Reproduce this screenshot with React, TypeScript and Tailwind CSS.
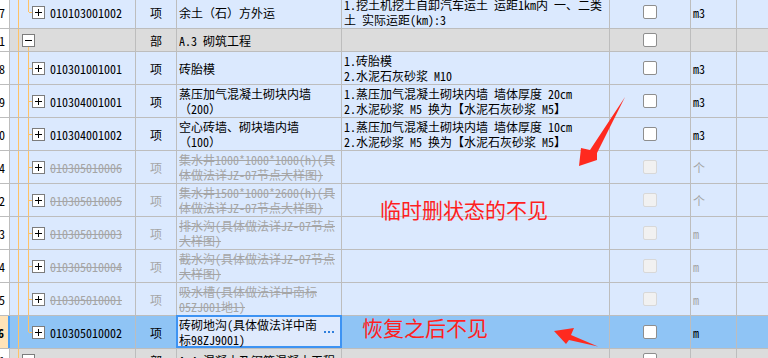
import React from "react";

const GRID = "grid grid-cols-[10px_126px_41px_165px_268px_81px_46px_32px]";

type Row = {
  group?: boolean;
  num: string;
  code?: string;
  name: string[];
  desc?: string[];
  unit?: string;
  deleted?: boolean;
  selected?: boolean;
  tree?: "first" | "mid" | "last";
  short?: boolean;
  lift?: boolean;
};

const rows: Row[] = [
  {
    num: "7",
    code: "010103001002",
    name: ["余土（石）方外运"],
    desc: ["1.挖土机挖土自卸汽车运土 运距1km内 一、二类", "土 实际运距(km):3"],
    unit: "m3",
    tree: "last",
    lift: true,
  },
  { group: true, num: "1", name: ["A.3 砌筑工程"], short: true, tree: "first" },
  {
    num: "8",
    code: "010301001001",
    name: ["砖胎模"],
    desc: ["1.砖胎模", "2.水泥石灰砂浆 M10"],
    unit: "m3",
    tree: "mid",
  },
  {
    num: "9",
    code: "010304001001",
    name: ["蒸压加气混凝土砌块内墙", "（200）"],
    desc: ["1.蒸压加气混凝土砌块内墙 墙体厚度 20cm", "2.水泥砂浆 M5 换为【水泥石灰砂浆 M5】"],
    unit: "m3",
    tree: "mid",
  },
  {
    num: "0",
    code: "010304001002",
    name: ["空心砖墙、砌块墙内墙", "（100）"],
    desc: ["1.蒸压加气混凝土砌块内墙 墙体厚度 10cm", "2.水泥砂浆 M5 换为【水泥石灰砂浆 M5】"],
    unit: "m3",
    tree: "mid",
  },
  {
    num: "4",
    code: "010305010006",
    name: ["集水井1000*1000*1000(h)(具", "体做法详JZ-07节点大样图)"],
    unit: "个",
    deleted: true,
    tree: "mid",
  },
  {
    num: "2",
    code: "010305010005",
    name: ["集水井1500*1000*2600(h)(具", "体做法详JZ-07节点大样图)"],
    unit: "个",
    deleted: true,
    tree: "mid",
  },
  {
    num: "3",
    code: "010305010003",
    name: ["排水沟(具体做法详JZ-07节点", "大样图)"],
    unit: "m",
    deleted: true,
    tree: "mid",
  },
  {
    num: "4",
    code: "010305010004",
    name: ["截水沟(具体做法详JZ-07节点", "大样图)"],
    unit: "m",
    deleted: true,
    tree: "mid",
  },
  {
    num: "5",
    code: "010305010001",
    name: ["吸水槽(具体做法详中南标", "05ZJ001地1)"],
    unit: "m",
    deleted: true,
    tree: "mid",
  },
  {
    num: "6",
    code: "010305010002",
    name: ["砖砌地沟(具体做法详中南", "标98ZJ9001)"],
    unit: "m",
    selected: true,
    tree: "last",
  },
  { group: true, num: "1", name: ["A.4 混凝土及钢筋混凝土工程"], short: true },
];

function Box({ plus }: { plus: boolean }) {
  return (
    <svg width="13" height="13" viewBox="0 0 13 13" className="relative z-10 shrink-0">
      <rect x="0" y="0" width="13" height="13" fill="#7c7c7c" />
      <rect x="1" y="1" width="11" height="11" fill="#ffffff" />
      <rect x="3" y="6" width="7" height="1" fill="#000000" />
      {plus && <rect x="6" y="3" width="1" height="7" fill="#000000" />}
    </svg>
  );
}

function Check({ disabled }: { disabled?: boolean }) {
  return disabled ? (
    <div className="w-[14px] h-[14px] rounded-[2px] border border-[#d8d8d8] bg-[#f1f1f1]" />
  ) : (
    <div className="w-[14px] h-[14px] rounded-[2px] border border-[#8e8e8e] bg-white" />
  );
}

function TableRow({ r }: { r: Row }) {
  const bg = r.selected ? "bg-[#8fc4f5]" : r.group ? "bg-[#dcdcdc]" : "bg-[#dbe9fe]";
  const fg = r.deleted ? "text-[#a5a5a5]" : "text-black";
  const strike = r.deleted ? "line-through" : "";
  return (
    <div
      className={`${GRID} ${r.short ? "h-[23px]" : "h-[33px]"} ${r.lift ? "-mt-[4px]" : ""} border-b border-[#bdbdbd] ${bg}`}
    >
      <div
        className={`flex items-center justify-end overflow-hidden pr-[4px] ${
          r.selected
            ? "border-r-2 border-[#4a9ff5] bg-[#ffe3b8] font-bold"
            : "border-r border-[#bdbdbd] bg-white"
        }`}
      >
        {r.num}
      </div>

      <div className="relative flex items-center border-r border-[#bdbdbd] overflow-hidden">
        <span className="absolute inset-y-0 left-[8px] w-px bg-[#ffc266]" />
        {r.tree === "mid" && <span className="absolute inset-y-0 left-[18px] w-px bg-[#ffc266]" />}
        {r.tree === "last" && <span className="absolute top-0 h-1/2 left-[18px] w-px bg-[#ffc266]" />}
        {r.tree === "first" && <span className="absolute top-1/2 bottom-0 left-[18px] w-px bg-[#ffc266]" />}
        {!r.group && <span className="absolute top-1/2 left-[19px] w-[3px] h-px bg-[#ffc266]" />}
        {r.group ? (
          <div className="pl-[12px] flex items-center">
            <Box plus={false} />
          </div>
        ) : (
          <div className="pl-[22px] flex items-center gap-[5px]">
            <Box plus />
            <span className={`${fg} ${strike} whitespace-nowrap`}>{r.code}</span>
          </div>
        )}
      </div>

      <div className={`flex items-center justify-center border-r border-[#bdbdbd] ${fg}`}>
        {r.group ? "部" : "项"}
      </div>

      <div className="relative flex items-center px-[2px] border-r border-[#bdbdbd] whitespace-nowrap overflow-visible">
        {r.selected && (
          <>
            <span className="absolute -left-[1px] -top-[1px] -right-[1px] bottom-0 border-2 border-[#3d93f3] bg-[#dfeafd]" />
            <span className="absolute inset-y-0 right-[7px] flex items-center gap-[2px] z-10">
              <span className="w-[2px] h-[2px] bg-[#2f7fdc]" />
              <span className="w-[2px] h-[2px] bg-[#2f7fdc]" />
              <span className="w-[2px] h-[2px] bg-[#2f7fdc]" />
            </span>
          </>
        )}
        <div className={`relative z-10 ${fg} ${strike} overflow-hidden`}>
          {r.name.map((l, i) => (
            <div key={i}>{l}</div>
          ))}
        </div>
      </div>

      <div className="flex items-center px-[2px] border-r border-[#bdbdbd] whitespace-nowrap overflow-hidden">
        <div className={fg}>
          {(r.desc || []).map((l, i) => (
            <div key={i}>{l}</div>
          ))}
        </div>
      </div>

      <div className="flex items-center justify-center border-r border-[#bdbdbd]">
        {!r.group || !r.short ? <Check disabled={r.deleted} /> : <Check />}
      </div>

      <div className={`flex items-center pl-[2px] border-r border-[#bdbdbd] ${fg}`}>{r.unit}</div>

      <div className="border-r border-[#bdbdbd]" />
    </div>
  );
}

export default function App() {
  return (
    <div className="relative w-[768px] h-[358px] overflow-hidden bg-white font-['Noto_Sans_Mono_CJK_SC','Noto_Sans_CJK_SC',sans-serif] text-[12px] leading-[15px]">
      <div className="flex flex-col">
        {rows.map((r, i) => (
          <TableRow key={i} r={r} />
        ))}
      </div>

      <div className="absolute left-[380px] top-[199px] text-[21px] leading-[21px] text-[#ff1f1f] font-['Noto_Sans_CJK_SC',sans-serif] whitespace-nowrap">
        临时删状态的不见
      </div>
      <div className="absolute left-[362px] top-[317px] text-[21px] leading-[21px] text-[#ff1f1f] font-['Noto_Sans_CJK_SC',sans-serif] whitespace-nowrap">
        恢复之后不见
      </div>

      <svg className="absolute left-0 top-0 pointer-events-none" width="768" height="358" viewBox="0 0 768 358">
        <polygon points="625,97 597,153 597,160 579,166 581,148 590,150" fill="#ff2a1f" />
        <polygon points="554,331 574,328 571,335 598,346.5 569,340 566,344" fill="#ff2a1f" />
      </svg>
    </div>
  );
}
